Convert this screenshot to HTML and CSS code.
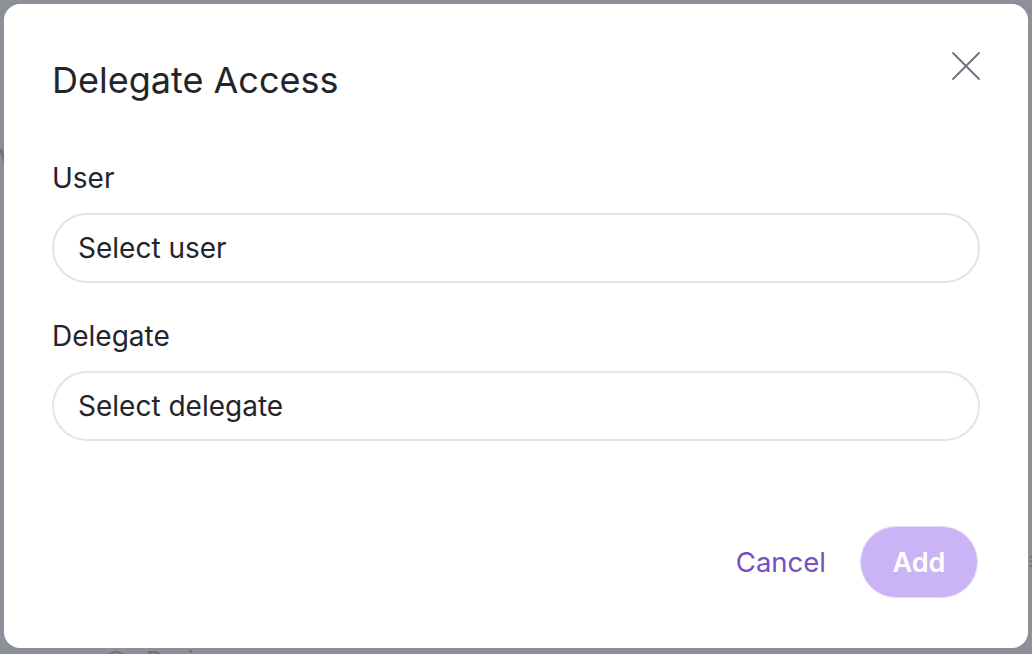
FILE: index.html
```html
<!DOCTYPE html>
<html lang="en">
<head>
<meta charset="utf-8">
<title>Delegate Access</title>
<link rel="stylesheet" href="styles.css">
</head>
<body>
<div class="backdrop" aria-hidden="true">
  <span class="bg-w">W</span>
  <span class="bg-paris"><span class="bg-pin"></span>Paris</span>
  <span class="bg-menu">≡</span>
</div>
<div class="modal" role="dialog" aria-labelledby="dlg-title">
  <div class="modal-header">
    <h2 id="dlg-title" class="modal-title">Delegate Access</h2>
    <button class="close-btn" aria-label="Close">
      <svg width="28" height="28" viewBox="0 0 28 28" fill="none" stroke="currentColor" stroke-width="1.8" stroke-linecap="round">
        <path d="M1 1 L27 27 M27 1 L1 27"/>
      </svg>
    </button>
  </div>
  <div class="field field-first">
    <label class="field-label">User</label>
    <div class="select">Select user</div>
  </div>
  <div class="field">
    <label class="field-label">Delegate</label>
    <div class="select">Select delegate</div>
  </div>
  <div class="actions">
    <button class="btn-cancel">Cancel</button>
    <button class="btn-add">Add</button>
  </div>
</div>
</body>
</html>
```

FILE: styles.css
```css
* { box-sizing: border-box; }
html, body { margin: 0; padding: 0; }
body {
  width: 1032px;
  height: 654px;
  background: #8d9098;
  font-family: Inter, "Noto Sans", sans-serif;
  color: #23252b;
  position: relative;
  overflow: hidden;
  padding: 4px;
}
.backdrop { position: absolute; inset: 0; color: #707379; font-size: 26px; }
.bg-w { position: absolute; left: -14px; top: 142px; font-size: 30px; }
.bg-paris { position: absolute; left: 106px; top: 646px; display: flex; align-items: center; gap: 20px; line-height: 30px; }
.bg-pin { width: 20px; height: 20px; border: 2px solid #707379; border-radius: 50%; }
.bg-menu { position: absolute; right: -12px; top: 545px; }

.modal {
  position: relative;
  width: 1024px;
  height: 644px;
  background: #ffffff;
  border-radius: 16px;
  padding: 48px 48px 50px;
  display: flex;
  flex-direction: column;
}
.modal-header {
  display: flex;
  justify-content: space-between;
  align-items: flex-start;
}
.modal-title {
  margin: 8px 0 0;
  font-size: 36px;
  font-weight: 400;
  line-height: 40px;
}
.close-btn {
  border: 0;
  background: none;
  padding: 0;
  width: 28px;
  height: 28px;
  color: #6c6f7c;
  display: flex;
}
.field { display: flex; flex-direction: column; }
.field-label {
  font-size: 28px;
  line-height: 32px;
  margin-top: 37px;
  margin-bottom: 19px;
}
.field-first .field-label { margin-top: 62px; }
.select {
  height: 70px;
  border: 2px solid #e3e4e8;
  border-radius: 35px;
  padding: 0 24px;
  display: flex;
  align-items: center;
  font-size: 28px;
}
.actions {
  margin-top: auto;
  display: flex;
  justify-content: flex-end;
  align-items: center;
  gap: 34px;
}
.btn-cancel {
  border: 0;
  background: none;
  padding: 0;
  font-family: inherit;
  font-size: 27.5px;
  color: #7a4dc2;
}
.btn-add {
  width: 118px;
  height: 72px;
  border: 1px solid #e6ddfa;
  border-radius: 36px;
  background: #cbb4f5;
  color: #ffffff;
  font-family: inherit;
  font-size: 27px;
  font-weight: 600;
  margin-right: 2px;
}
```
